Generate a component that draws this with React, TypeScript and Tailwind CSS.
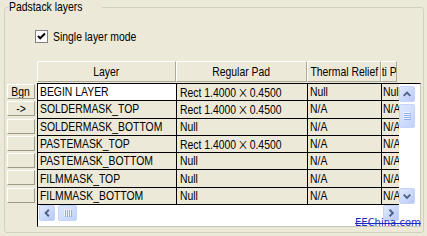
import React from "react";

const F = "font-['Liberation_Sans',Arial,sans-serif]";

function T({ children, center }: { children: React.ReactNode; center?: boolean }) {
  return (
    <span
      className={
        "inline-block whitespace-nowrap shrink-0 scale-x-[0.8] " + (center ? "origin-center" : "origin-left")
      }
    >
      {children}
    </span>
  );
}

function Times() {
  return <span className="font-['Noto_Sans_CJK_SC',sans-serif] px-[2px]">×</span>;
}

const rows: { h: string; c1: string; c2: string; c3: string; c4: string }[] = [
  { h: "Bgn", c1: "BEGIN LAYER", c2: "rect", c3: "Null", c4: "Null" },
  { h: "->", c1: "SOLDERMASK_TOP", c2: "rect", c3: "N/A", c4: "N/A" },
  { h: "", c1: "SOLDERMASK_BOTTOM", c2: "Null", c3: "N/A", c4: "N/A" },
  { h: "", c1: "PASTEMASK_TOP", c2: "rect", c3: "N/A", c4: "N/A" },
  { h: "", c1: "PASTEMASK_BOTTOM", c2: "Null", c3: "N/A", c4: "N/A" },
  { h: "", c1: "FILMMASK_TOP", c2: "Null", c3: "N/A", c4: "N/A" },
  { h: "", c1: "FILMMASK_BOTTOM", c2: "Null", c3: "N/A", c4: "N/A" },
];

function ScrollBtn({ dir }: { dir: "up" | "down" | "left" | "right" }) {
  const paths: Record<string, string> = {
    up: "M4 9.5 L7.5 6 L11 9.5",
    down: "M4 6 L7.5 9.5 L11 6",
    left: "M9.5 4 L6 7.5 L9.5 11",
    right: "M6 4 L9.5 7.5 L6 11",
  };
  return (
    <div className="w-[16px] h-[16px] rounded-[2px] border border-[#c3d3fb] bg-[linear-gradient(135deg,#e1e9fe,#b7c9f6)] shrink-0">
      <svg width="14" height="14" viewBox="0 0 15 15">
        <path d={paths[dir]} fill="none" stroke="#4d6185" strokeWidth="2" />
      </svg>
    </div>
  );
}

function Thumb({ vertical }: { vertical: boolean }) {
  return (
    <div
      className={
        (vertical ? "w-[16px] h-[24px]" : "w-[19px] h-[16px]") +
        " rounded-[2px] border border-[#c3d3fb] bg-[linear-gradient(135deg,#dfe8fe,#c2d3f9)] shrink-0 flex items-center justify-center"
      }
    >
      {vertical ? (
        <svg width="8" height="8" viewBox="0 0 8 8">
          {[0, 2, 4, 6].map((y) => (
            <g key={y}>
              <line x1="0" x2="7" y1={y + 0.5} y2={y + 0.5} stroke="#eef3ff" />
              <line x1="1" x2="8" y1={y + 1.5} y2={y + 1.5} stroke="#8eaef0" />
            </g>
          ))}
        </svg>
      ) : (
        <svg width="8" height="8" viewBox="0 0 8 8">
          {[0, 2, 4, 6].map((x) => (
            <g key={x}>
              <line y1="0" y2="7" x1={x + 0.5} x2={x + 0.5} stroke="#eef3ff" />
              <line y1="1" y2="8" x1={x + 1.5} x2={x + 1.5} stroke="#8eaef0" />
            </g>
          ))}
        </svg>
      )}
    </div>
  );
}

export default function App() {
  return (
    <div className={`w-[427px] h-[236px] overflow-hidden bg-[#ECE9D8] relative text-[13px] leading-[16px] text-black ${F} px-[4px]`}>
      <fieldset className="w-[420px] h-[233px] border border-[#d0d0bf] rounded-[3px]">
        <legend className="ml-[3px] px-[1px] leading-[14px]">
          <T>Padstack layers</T>
        </legend>
        {/* checkbox */}
        <div className="flex items-center mt-[16px] ml-[30px] h-[13px]">
          <div className="w-[13px] h-[13px] border border-[#808080] bg-white flex items-center justify-center">
            <svg width="11" height="11" viewBox="0 0 11 11">
              <path d="M2 5 L4.2 7.3 L9 2.5" fill="none" stroke="#000" strokeWidth="2" />
            </svg>
          </div>
          <span className="ml-[5px]">
            <T>Single layer mode</T>
          </span>
        </div>
        {/* grid */}
        <div className="flex mt-[18px] ml-[2px]">
          {/* row headers */}
          <div className="w-[30px] flex flex-col pt-[22px]">
            {rows.map((r, i) => (
              <div key={i} className="h-[17.3px] flex items-start pt-[1px]">
                <div className="w-[28px] h-[15px] border-t border-l border-white border-r border-b border-r-[#9d9a8c] border-b-[#9d9a8c] flex items-center justify-center leading-[13px] overflow-hidden">
                  {r.h && <T center>{r.h}</T>}
                </div>
              </div>
            ))}
          </div>
          <div className="flex flex-col">
            {/* header */}
            <div className="flex h-[22px]">
              {[
                ["Layer", "w-[139px]"],
                ["Regular Pad", "w-[131px]"],
                ["Thermal Relief", "w-[74px]"],
                ["Anti Pad", "w-[16px]"],
              ].map(([t, w]) => (
                <div
                  key={t}
                  className={`${w} h-[21px] border-t border-l border-white border-r border-b border-r-[#aca899] border-b-[#aca899] flex items-center justify-center overflow-hidden`}
                >
                  <T center>{t}</T>
                </div>
              ))}
            </div>
            {/* data region */}
            <div className="w-[384px] h-[144px] bg-white border-l border-t border-l-black border-t-black border-r border-b border-r-[#c9c6b6] border-b-[#c9c6b6] flex flex-col">
              <div className="flex h-[121.1px]">
                <div className="w-[361px] overflow-hidden">
                  {rows.map((r, i) => (
                    <div key={i} className="flex h-[17.3px] border-b border-black">
                      <div className={`w-[139px] shrink-0 border-r border-black pl-[2px] flex items-center overflow-hidden ${i === 0 ? "bg-white" : "bg-[#ECE9D8]"}`}>
                        <T>{r.c1}</T>
                      </div>
                      <div className="w-[131px] shrink-0 border-r border-black pl-[3px] flex items-center overflow-hidden bg-[#ECE9D8]">
                        {r.c2 === "rect" ? (
                          <T>
                            Rect 1.4000<Times />0.4500
                          </T>
                        ) : (
                          <T>{r.c2}</T>
                        )}
                      </div>
                      <div className="w-[74px] shrink-0 border-r border-black pl-[2px] flex items-center overflow-hidden bg-[#ECE9D8]">
                        <T>{r.c3}</T>
                      </div>
                      <div className="w-[60px] shrink-0 border-r border-black pl-[1px] flex items-center overflow-hidden bg-[#ECE9D8]">
                        <T>{r.c4}</T>
                      </div>
                    </div>
                  ))}
                </div>
                <div className="w-[16px] flex flex-col pt-[2px] pb-[1px]">
                  <ScrollBtn dir="up" />
                  <div className="mt-[2px]">
                    <Thumb vertical />
                  </div>
                  <div className="mt-auto">
                    <ScrollBtn dir="down" />
                  </div>
                </div>
              </div>
              <div className="flex ml-[1px] w-[360px] h-[16px]">
                <ScrollBtn dir="left" />
                <div className="ml-[3px]">
                  <Thumb vertical={false} />
                </div>
                <div className="ml-auto">
                  <ScrollBtn dir="right" />
                </div>
              </div>
            </div>
          </div>
        </div>
      </fieldset>
      <div className="absolute left-[355px] top-[217px] text-[10px] leading-[12px] text-[#1a2bc4] font-['DejaVu_Sans',sans-serif] line-through decoration-[#1a2bc4]">
        EEChina.com
      </div>
    </div>
  );
}
